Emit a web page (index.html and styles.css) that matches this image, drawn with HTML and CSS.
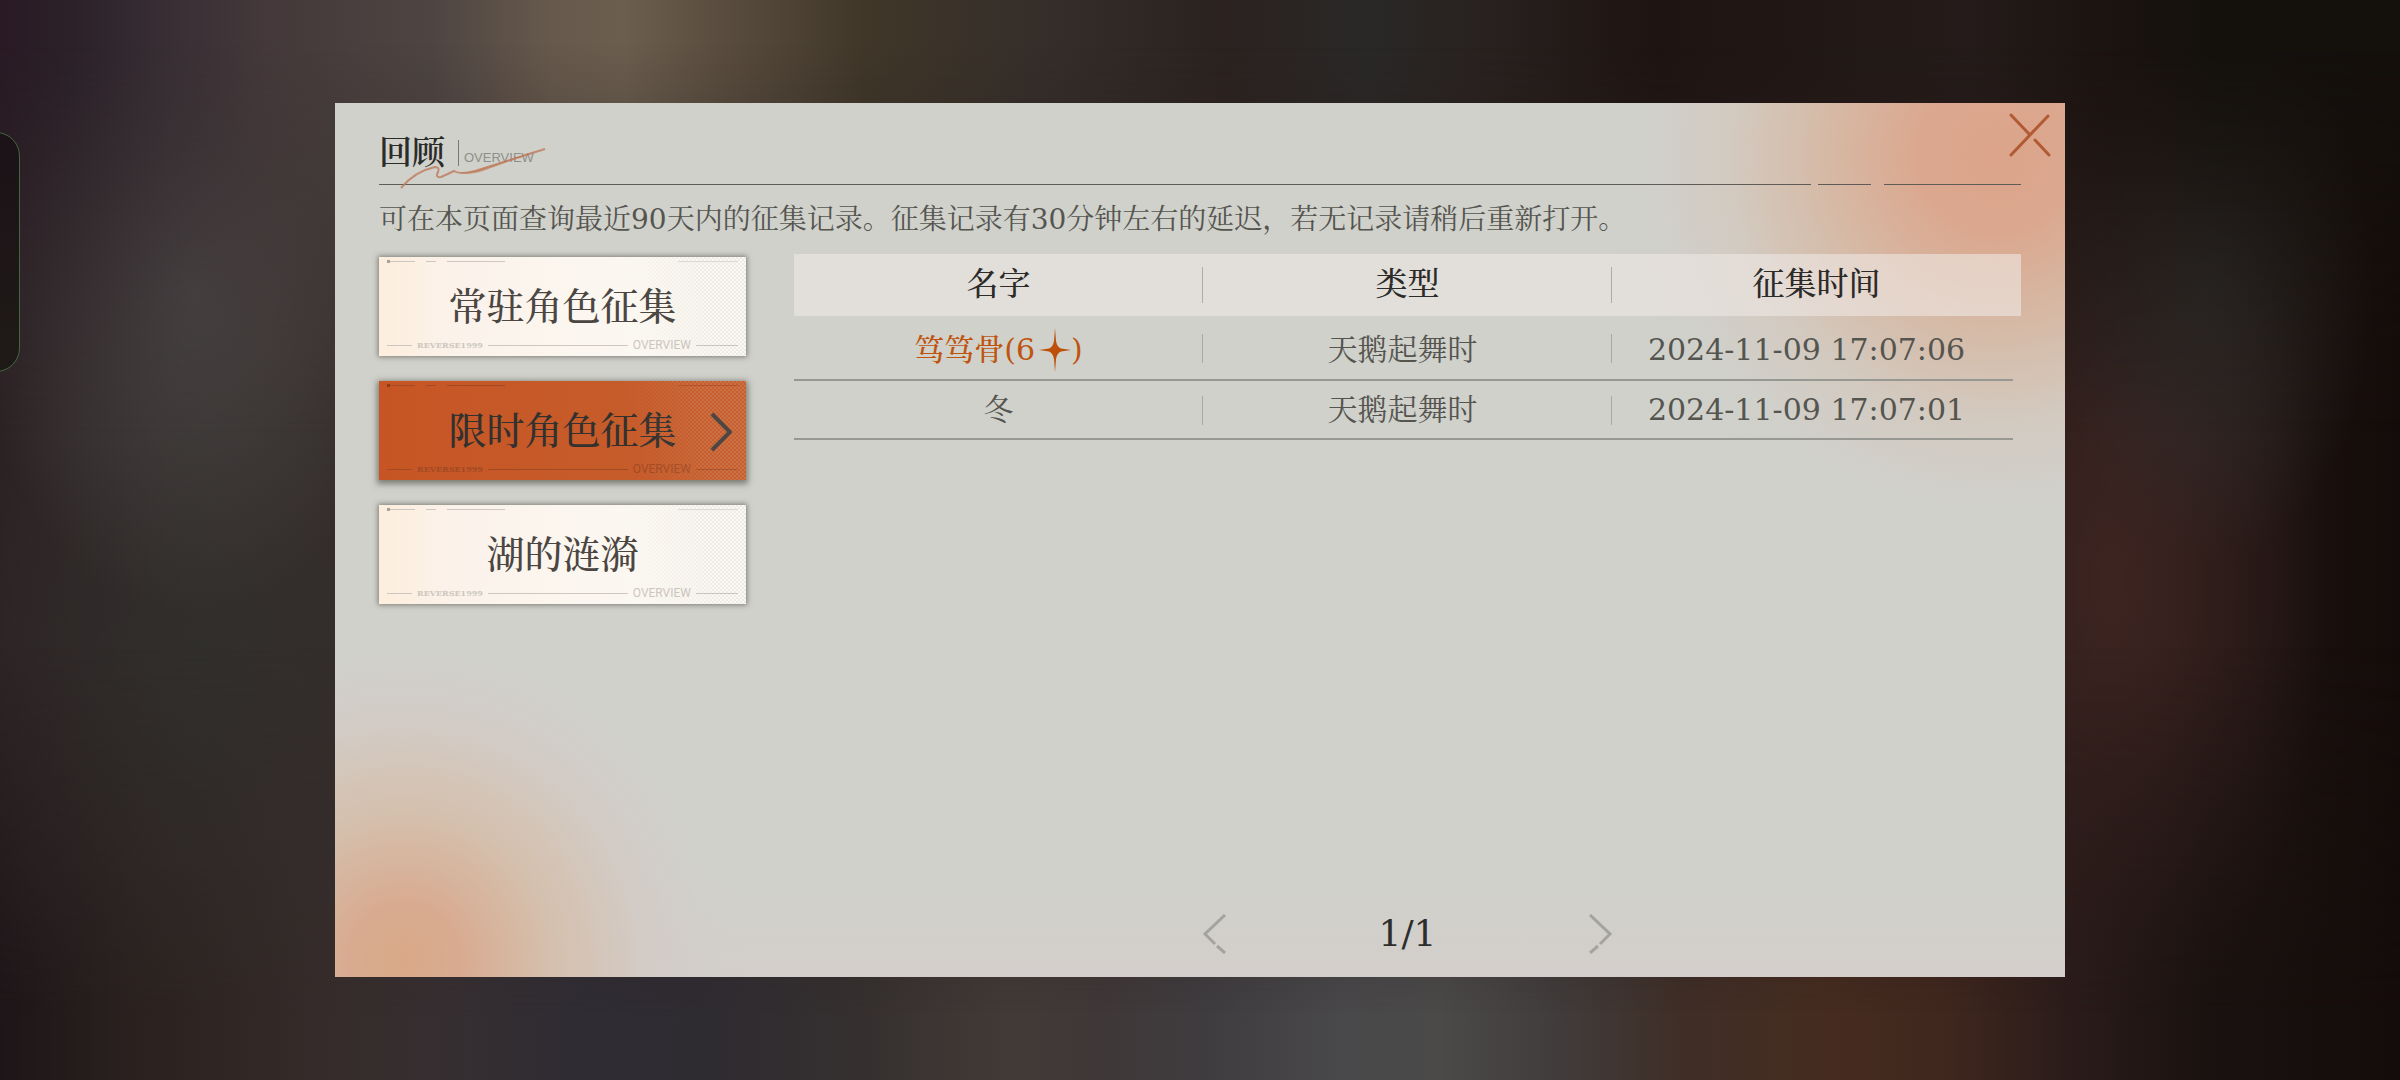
FILE: index.html
```html
<!DOCTYPE html>
<html lang="zh-CN">
<head>
<meta charset="utf-8">
<meta name="viewport" content="width=device-width, initial-scale=1">
<title>回顾</title>
<link rel="stylesheet" href="styles.css">
</head>
<body>
<div class="drawer" aria-hidden="true"></div>
<main class="panel">
  <button class="close" type="button" aria-label="关闭">
    <svg width="42" height="44" viewBox="0 0 42 44"><path d="M2 42 39 3M2 2l19 20M26 27l14 15"/></svg>
  </button>

  <header class="head">
    <h1 class="title">回顾</h1>
    <span class="subtitle">OVERVIEW</span>
    <svg class="flourish" width="150" height="42" viewBox="0 0 150 42" aria-hidden="true">
      <path class="flourish-stroke" d="M2 40C12 28 22 22 36 19Q41 19 39 24Q36 30 42 29Q49 26 55 23Q61 27 76 23L146 1"/>
      <path class="flourish-body" d="M60 24q8 2 22-3l58-19-56 21q-16 5-24 1z"/>
    </svg>
  </header>
  <div class="rule"><i class="rule-long"></i><i class="rule-short"></i><i class="rule-end"></i></div>

  <p class="hint">可在本页面查询最近90天内的征集记录。征集记录有30分钟左右的延迟，若无记录请稍后重新打开。</p>

  <div class="content">
    <nav class="tabs">
      <button class="tab" type="button">
        <span class="tab-top"><i></i><i></i><i></i><i></i></span>
        <span class="tab-label">常驻角色征集</span>
        <span class="tab-foot"><i></i><small>REVERSE1999</small><i></i><b>OVERVIEW</b><i></i></span>
      </button>
      <button class="tab tab-active" type="button" aria-current="page">
        <span class="tab-top"><i></i><i></i><i></i><i></i></span>
        <span class="tab-label">限时角色征集</span>
        <span class="tab-foot"><i></i><small>REVERSE1999</small><i></i><b>OVERVIEW</b><i></i></span>
        <svg class="chevron" width="22" height="40" viewBox="0 0 22 40" aria-hidden="true"><path d="M2 2 20 20 2 38"/></svg>
      </button>
      <button class="tab" type="button">
        <span class="tab-top"><i></i><i></i><i></i><i></i></span>
        <span class="tab-label">湖的涟漪</span>
        <span class="tab-foot"><i></i><small>REVERSE1999</small><i></i><b>OVERVIEW</b><i></i></span>
      </button>
    </nav>

    <section class="records">
      <table class="table">
        <thead>
          <tr><th>名字</th><th>类型</th><th>征集时间</th></tr>
        </thead>
        <tbody>
          <tr class="row-first">
            <td class="rare"><span class="rare-name">笃笃骨(6<svg class="star" width="32" height="44" viewBox="0 0 32 44" role="img" aria-label="星"><path d="M16 0 17 13Q18 19 22 20.500L32 22 22 23.500Q18 25 17 31L16 44 15 31Q14 25 10 23.500L0 22 10 20.500Q14 19 15 13Z"/></svg>)</span></td>
            <td class="kind">天鹅起舞时</td>
            <td class="time">2024-11-09 17:07:06</td>
          </tr>
          <tr>
            <td>冬</td>
            <td class="kind">天鹅起舞时</td>
            <td class="time">2024-11-09 17:07:01</td>
          </tr>
        </tbody>
      </table>

      <div class="pager">
        <button class="page-btn" type="button" aria-label="上一页">
          <svg width="24" height="40" viewBox="0 0 24 40"><path d="M22 1 2 20l10 10M14 32l8 7"/></svg>
        </button>
        <span class="page-num">1/1</span>
        <button class="page-btn" type="button" aria-label="下一页">
          <svg width="24" height="40" viewBox="0 0 24 40"><path d="M2 1 22 20 12 30M10 32l-8 7"/></svg>
        </button>
      </div>
    </section>
  </div>
</main>
</body>
</html>
```
FILE: styles.css
```css
* { box-sizing: border-box; }

body {
  position: relative;
  margin: 0;
  min-height: 100vh;
  padding: 103px 335px;
  display: flex;
  overflow: hidden;
  font-family: "DejaVu Serif", "Noto Serif CJK SC", "Noto Sans CJK SC", serif;
  color: #555550;
  background:
    radial-gradient(ellipse 9% 30% at 8% 27%, rgba(74, 72, 70, .9) 0%, rgba(72, 70, 69, 0) 100%),
    radial-gradient(ellipse 10% 40% at 8% 66%, rgba(48, 49, 45, .8) 0%, rgba(50, 51, 47, 0) 100%),
    radial-gradient(ellipse 7% 26% at 92% 26%, rgba(50, 49, 48, .8) 0%, rgba(51, 50, 49, 0) 100%),
    radial-gradient(ellipse 9% 44% at 88% 54%, rgba(64, 38, 34, .9) 0%, rgba(64, 38, 34, 0) 100%),
    linear-gradient(90deg, #2c2224 0%, #352c2c 12%, #2a2120 45%, #241816 90%, #140c0a 100%);
}

/* Blurred scene behind the dialog: upper and lower bands of light */
body::before, body::after {
  content: "";
  position: absolute;
  left: 0;
  right: 0;
  height: 40%;
}
body::before {
  top: 0;
  background: linear-gradient(90deg, #291a24 0%, #2c2129 3%, #382e34 7%, #44383a 11%, #4e4542 18%, #67594c 23%, #6b5e4f 26%, #5a4d3f 30%, #403729 36%, #342d29 44%, #2b2220 51%, #292827 57%, #28211f 62%, #1e1412 69%, #221917 77%, #241b1a 82%, #1b1310 88%, #14110d 92%, #14100c 100%);
  mask-image: linear-gradient(#000 10%, rgba(0, 0, 0, .5) 50%, transparent);
}
body::after {
  bottom: 0;
  background: linear-gradient(90deg, #1e1518 0%, #2b2220 6%, #362c2b 14%, #352e31 19%, #2f2c33 24%, #2e2b31 29%, #35302f 36%, #423a37 42%, #3f3838 46%, #3f3c3f 50%, #49484a 56%, #4b4a49 60%, #403c3b 65%, #3f2e27 70%, #462c20 76%, #40271e 81%, #2b1c1a 86%, #1a1210 92%, #140c0b 100%);
  mask-image: linear-gradient(transparent, rgba(0, 0, 0, .5) 50%, #000 85%);
}

button {
  padding: 0;
  border: 0;
  background: none;
  font: inherit;
  color: inherit;
  cursor: pointer;
}

svg { display: block; fill: none; }

/* Edge of the side drawer peeking in from the left */
.drawer {
  position: absolute;
  z-index: 1;
  left: -40px;
  top: 132px;
  width: 60px;
  height: 240px;
  border: 1px solid #3b6b3f;
  border-radius: 24px;
  background: linear-gradient(#1c1218, #1f1a17);
}

.panel {
  position: relative;
  z-index: 1;
  flex: 1;
  display: flex;
  flex-direction: column;
  padding: 26px 44px 20px;
  background:
    radial-gradient(circle 400px at 96% 6%, #dba48a 0%, #dba88f 20%, rgba(214, 184, 163, .9) 44%, rgba(211, 201, 191, .8) 68%, rgba(209, 206, 201, .4) 86%, rgba(208, 209, 203, 0) 100%),
    radial-gradient(circle 350px at 4% 98%, #d9a888 0%, #d8ab90 16%, rgba(213, 190, 170, .9) 42%, rgba(211, 202, 196, .8) 68%, rgba(209, 206, 201, .4) 86%, rgba(208, 209, 203, 0) 100%),
    linear-gradient(rgba(211, 206, 203, 0) 88%, #d3cecb 100%),
    #d0d1cb;
}

.close {
  position: absolute;
  top: 10px;
  right: 14px;
}
.close svg {
  stroke: #b15a33;
  stroke-width: 3;
  stroke-linecap: round;
}

.head {
  position: relative;
  display: flex;
  height: 54px;
}
.title {
  margin: 0;
  font-size: 33px;
  line-height: 48px;
  font-weight: 600;
  color: #2b2c2a;
}
.subtitle {
  height: 26px;
  margin: 11px 0 0 13px;
  padding: 9px 0 0 5px;
  border-left: 1px solid #777873;
  font: 13px/18px "Liberation Sans", sans-serif;
  color: #8e8f8a;
}
.flourish {
  position: absolute;
  left: 20px;
  top: 19px;
}
.flourish-stroke { stroke: #bd7a5c; stroke-width: 2; opacity: .8; }
.flourish-body { fill: #c07a59; opacity: .7; }

.rule { display: flex; margin-top: 1px; height: 1px; }
.rule i { background: #5f5c57; }
.rule-long { flex: 1; }
.rule-short { width: 53px; margin: 0 13px 0 7px; }
.rule-end { width: 137px; }

.hint {
  margin: 15px 0 14px;
  font-size: 28px;
  line-height: 40px;
}

.content {
  flex: 1;
  display: flex;
  gap: 48px;
}

.tabs {
  width: 367px;
  padding-top: 3px;
  display: flex;
  flex-direction: column;
  gap: 25px;
}
.tab {
  position: relative;
  height: 99px;
  padding: 3px 8px 4px;
  display: flex;
  flex-direction: column;
  background: linear-gradient(90deg, #fdeedd 0%, #fbf2ea 20%, #fbf7f0 60%, #faf8f3 100%);
  box-shadow: 0 0 5px 1px rgba(90, 90, 80, .7);
  color: #4b4642;
}
/* Halftone texture on the right end */
.tab::before {
  content: "";
  position: absolute;
  inset: 0 0 0 auto;
  width: 120px;
  background: repeating-conic-gradient(rgba(160, 150, 135, .12) 0 25%, transparent 0 50%) 0 0 / 4px 4px;
  mask-image: linear-gradient(80deg, transparent 10%, #000 70%);
}
.tab-active {
  background: linear-gradient(90deg, #c75524, #c65f2e);
  box-shadow: 0 2px 6px 2px rgba(90, 90, 80, .7);
  color: #33312f;
}
.tab-active::before {
  background-image: repeating-conic-gradient(rgba(225, 180, 160, .22) 0 25%, transparent 0 50%);
}
.tab-label {
  margin-top: 16px;
  font-size: 38px;
  line-height: 56px;
  font-weight: 500;
  text-align: center;
}
.tab-top, .tab-foot { display: flex; align-items: center; color: #cdc7bf; }
.tab-top { height: 3px; gap: 11px; }
.tab-top i, .tab-foot i { height: 1px; background: currentColor; }
.tab-top i:nth-child(1) {
  width: 28px;
  height: 3px;
  border-left: 3px solid #a9a198;
  background: linear-gradient(currentColor, currentColor) 0 1px / 100% 1px no-repeat;
}
.tab-top i:nth-child(2) { width: 10px; }
.tab-top i:nth-child(3) { width: 58px; }
.tab-top i:nth-child(4) { width: 60px; margin-left: auto; opacity: .6; }
.tab-foot { height: 14px; margin-top: auto; gap: 5px; }
.tab-foot i:nth-child(1) { width: 25px; }
.tab-foot i:nth-child(3) { flex: 1; }
.tab-foot i:nth-child(5) { width: 42px; }
.tab-foot small { font-size: 8px; line-height: 8px; font-weight: 700; }
.tab-foot b { font: 12px/14px Roboto, sans-serif; }
.tab-active .tab-top, .tab-active .tab-foot { color: #a14a24; }
.tab-active .tab-top i:nth-child(1) { border-color: #8a3c1b; }
.chevron {
  position: absolute;
  right: 14px;
  top: 31px;
  stroke: #4b4745;
  stroke-width: 4;
}

.records {
  flex: 1;
  display: flex;
  flex-direction: column;
  justify-content: space-between;
}
.table {
  width: 100%;
  table-layout: fixed;
  border-collapse: collapse;
  text-align: center;
}
th, td { padding: 0; }
th {
  height: 62px;
  padding-bottom: 2px;
  font-size: 32px;
  line-height: 40px;
  font-weight: 500;
  color: #2c2b29;
}
thead tr { background: rgba(238, 232, 229, .6); }
td {
  height: 59px;
  padding-bottom: 2px;
  font-size: 30px;
  line-height: 36px;
}
.row-first td { height: 65px; padding-top: 4px; }
tbody tr {
  background: linear-gradient(#979891, #979891) left bottom / calc(100% - 8px) 2px no-repeat;
}
th:not(:last-child) {
  background: linear-gradient(#aeaca9, #aeaca9) right center / 1px 36px no-repeat;
}
td:not(:last-child) {
  background: linear-gradient(#a9aaa4, #a9aaa4) right center / 1px 29px no-repeat;
}
.kind { padding-right: 10px; }
.time { padding-right: 20px; }
.rare { color: #bf540f; font-weight: 500; }
.rare-name { display: inline-flex; align-items: center; height: 36px; }
.star { margin: 0 0 0 4px; fill: #bd4f0b; }

.pager {
  display: flex;
  justify-content: center;
  align-items: center;
  gap: 152px;
  height: 46px;
}
.page-btn svg { stroke: #a3a49f; stroke-width: 3; }
.page-num {
  font-size: 36px;
  line-height: 46px;
  color: #2d2e2c;
}
```
